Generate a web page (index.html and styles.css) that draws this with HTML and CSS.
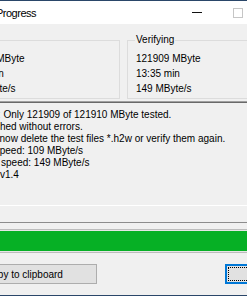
FILE: index.html
```html
<!DOCTYPE html>
<html lang="en">
<head>
    <meta charset="UTF-8">
    <meta name="viewport" content="width=device-width, initial-scale=1.0">
    <title>H2testw Progress</title>
    <link rel="stylesheet" href="styles.css">
</head>
<body>

    <div class="window">
        <div class="titlebar">
            <span class="title">Progress</span>
            <div class="caption-btns">
                <span class="cap-min"></span>
                <span class="cap-max"></span>
            </div>
        </div>

        <div class="client">
            <div class="groups">
                <div class="group">
                    <span class="group-label">Writing</span>
                    <div>121909 MByte</div>
                    <div>18:36 min</div>
                    <div>109 MByte/s</div>
                </div>
                <div class="group">
                    <span class="group-label">Verifying</span>
                    <div>121909 MByte</div>
                    <div>13:35 min</div>
                    <div>149 MByte/s</div>
                </div>
            </div>

            <div class="log">
                Warning: Only 121909 of 121910 MByte tested.<br>
                Test finished without errors.<br>
                You can now delete the test files *.h2w or verify them again.<br>
                Writing speed: 109 MByte/s<br>
                Reading speed: 149 MByte/s<br>
                H2testw v1.4
            </div>

            <div class="rule"></div>

            <div class="progress">
                <div class="progress-fill"></div>
            </div>

            <div class="buttons">
                <button class="btn">Copy to clipboard</button>
                <button class="btn btn-default">OK</button>
            </div>
        </div>
    </div>

</body>
</html>
```

FILE: styles.css
```css
html, body {
    margin: 0;
    overflow: hidden;
}
body {
    width: 247px;
    height: 296px;
    background-color: #f0f0f0;
    font-family: "Liberation Sans", Arial, sans-serif;
    font-size: 10px;
    color: #000;
}
.window {
    height: 296px;
    box-sizing: border-box;
    border-top: 1px solid #2a4669;
    border-bottom: 1px solid #2a4669;
    overflow: hidden;
}
.titlebar {
    height: 23px;
    background-color: #fff;
    display: flex;
    align-items: center;
}
.title {
    margin-left: -4px;
    font-size: 11px;
    letter-spacing: -0.5px;
    white-space: nowrap;
}
.caption-btns {
    margin-left: auto;
    margin-right: 4px;
    display: flex;
    align-items: center;
    gap: 31px;
}
.cap-min {
    width: 10px;
    height: 1px;
    background-color: #111;
}
.cap-max {
    width: 10px;
    height: 10px;
    box-sizing: border-box;
    border: 1px solid #c6c6c6;
}

/* group boxes */
.groups {
    display: flex;
    gap: 7px;
    margin-top: 16px;
    margin-left: -49px;
}
.group {
    position: relative;
    flex: none;
    width: 169px;
    height: 59px;
    box-sizing: border-box;
    border: 1px solid #dcdcdc;
    padding: 10px 0 0 8px;
    line-height: 15px;
    white-space: nowrap;
}
.group-label {
    position: absolute;
    top: -7px;
    left: 7px;
    line-height: 12px;
    padding: 0 1px;
    background-color: #f0f0f0;
}

/* read-only text box */
.log {
    width: 420px;
    height: 105px;
    box-sizing: border-box;
    margin-top: 2px;
    margin-left: -44px;
    padding: 7px 0 0 4px;
    border: 1px solid;
    border-color: #a0a0a0 #fff #fff #a0a0a0;
    box-shadow: inset 1px 1px 0 #696969;
    line-height: 12px;
    white-space: nowrap;
}

.rule {
    margin-top: 16px;
    border-top: 1px solid #8c8c8c;
}

.progress {
    margin-top: 6px;
    margin-left: -20px;
    width: 400px;
    height: 24px;
    box-sizing: border-box;
    padding: 1px;
    border: 1px solid #bcbcbc;
    background-color: #e6e6e6;
}
.progress-fill {
    height: 100%;
    background-color: #06b025;
}

.buttons {
    display: flex;
    margin-top: 11px;
}
.btn {
    flex: none;
    height: 20px;
    box-sizing: border-box;
    padding: 0;
    font-family: inherit;
    font-size: 10px;
    color: #000;
    background-color: #e1e1e1;
    border: 1px solid #adadad;
    white-space: nowrap;
}
.btn:first-child {
    margin-left: -49px;
    width: 146px;
}
.btn-default {
    margin-left: 128px;
    width: 75px;
    border-color: #0078d7;
    box-shadow: inset 0 0 0 1px #0078d7;
    outline: 1px dotted #000;
    outline-offset: -4px;
}
```
